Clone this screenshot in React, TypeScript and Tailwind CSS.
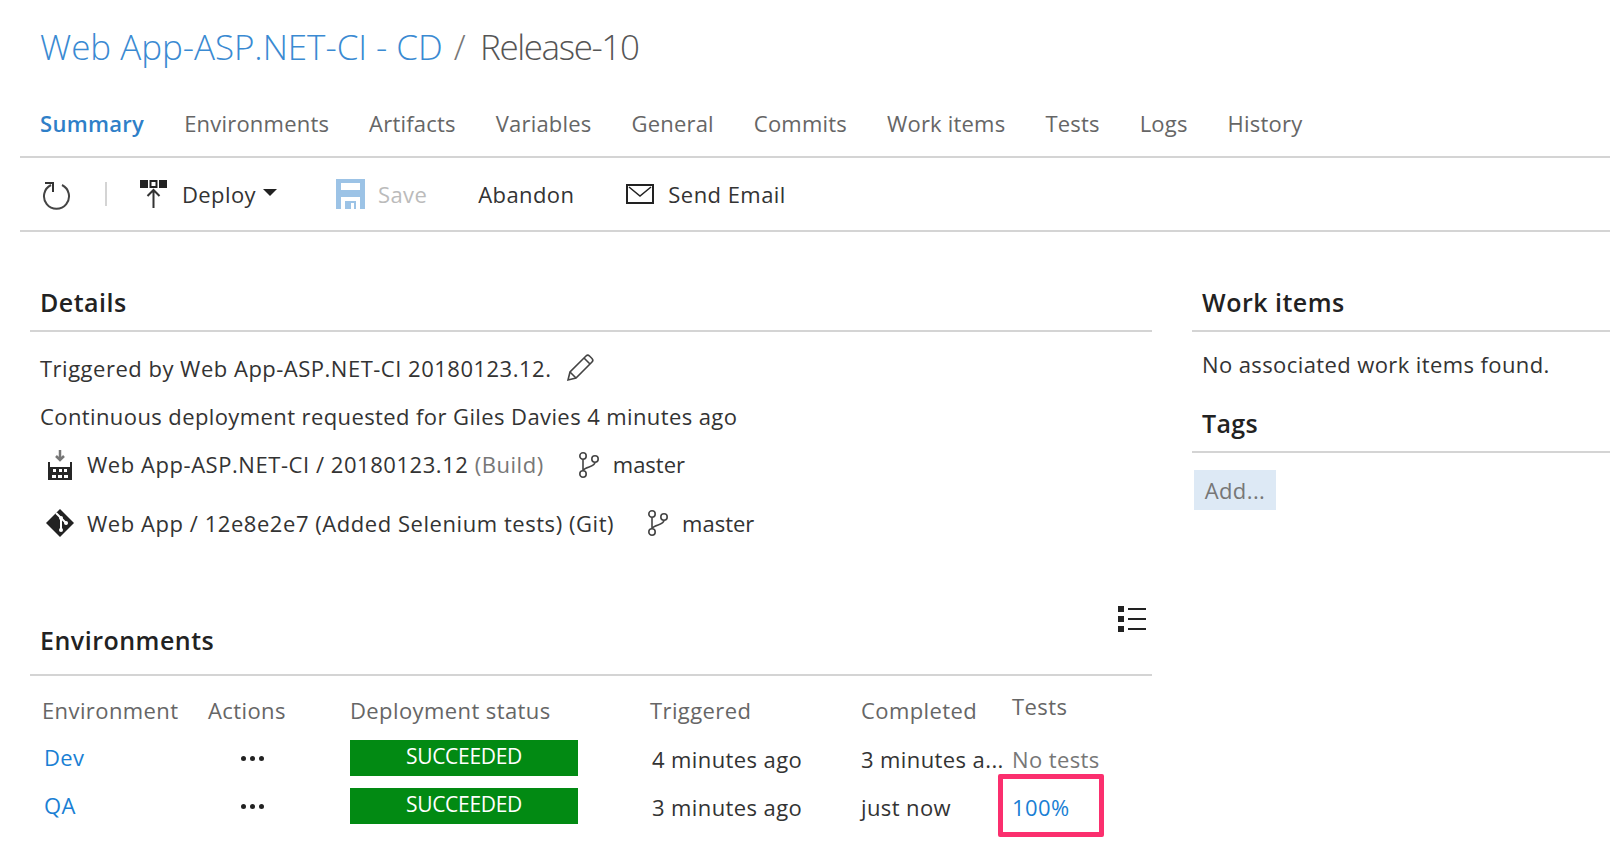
const tabs = ["Environments", "Artifacts", "Variables", "General", "Commits", "Work items", "Tests", "Logs", "History"];

function RefreshIcon() {
  return (
    <svg width="30" height="32" viewBox="0 0 30 32" fill="none" stroke="#333" strokeWidth="2">
      <path d="M20 7a12.5 12.5 0 1 1-11 0" stroke="#444" />
      <path d="M3 5h8v9" strokeWidth="2" />
    </svg>
  );
}

function DeployIcon() {
  return (
    <svg width="28" height="30" viewBox="0 0 28 30" fill="none">
      <rect x="0" y="1" width="8" height="8" fill="#222" />
      <rect x="10.5" y="2" width="6" height="6" stroke="#222" strokeWidth="2" />
      <rect x="19" y="1" width="8" height="8" fill="#222" />
      <path d="M13.5 29V11M7.5 17l6-6 6 6" stroke="#333" strokeWidth="2" />
    </svg>
  );
}

function SaveIcon() {
  return (
    <svg width="29" height="30" viewBox="0 0 29 30">
      <path d="M0 0h29v30h-5V18H5v12H0z" fill="#9cc3e6" />
      <path d="M5 4h19v7H5z" fill="#fff" />
      <path d="M9 22h11v8H9z" fill="#9cc3e6" />
      <path d="M15 24h3v6h-3z" fill="#fff" />
    </svg>
  );
}

function MailIcon() {
  return (
    <svg width="28" height="20" viewBox="0 0 28 20" fill="none" stroke="#222" strokeWidth="2">
      <rect x="1" y="1" width="26" height="18" />
      <path d="M3 3l11 9 11-9" strokeWidth="1.5" />
    </svg>
  );
}

function PencilIcon() {
  return (
    <svg width="30" height="30" viewBox="0 0 30 30" fill="none" stroke="#444" strokeWidth="1.6">
      <path d="M3 27l2-8L21 3a2.5 2.5 0 0 1 3.5 0l2.5 2.5a2.5 2.5 0 0 1 0 3.5L11 25z" />
      <path d="M5 19l6 6M19 5l6 6" />
    </svg>
  );
}

function BuildIcon() {
  return (
    <svg width="26" height="30" viewBox="0 0 26 30">
      <path d="M13 0v9M9 6l4 4 4-4" stroke="#777" strokeWidth="2.5" fill="none" />
      <path d="M1 12h2v5h20v-5h2v18H1z" fill="#262626" />
      <path d="M6 19h3v3H6zM12 19h3v3h-3zM17 19h3v3h-3zM5 25h4v3H5zM11 25h4v3h-4zM17 25h4v3h-4z" fill="#fff" />
    </svg>
  );
}

function GitIcon() {
  return (
    <svg width="30" height="30" viewBox="0 0 30 30">
      <path d="M15 1l14 14-14 14L1 15z" fill="#222" />
      <path d="M11 5l5 5M16 10v12" stroke="#fff" strokeWidth="2" />
      <path d="M16 10l6 6" stroke="#fff" strokeWidth="2" />
      <circle cx="16" cy="10" r="2" fill="#fff" />
      <circle cx="21" cy="15" r="2" fill="#fff" />
      <circle cx="16" cy="22" r="2" fill="#fff" />
    </svg>
  );
}

function BranchIcon() {
  return (
    <svg width="22" height="28" viewBox="0 0 22 28" fill="none" stroke="#444" strokeWidth="1.6">
      <circle cx="5" cy="5" r="3.2" />
      <circle cx="5" cy="23" r="3.2" />
      <circle cx="17" cy="8" r="3.2" />
      <path d="M5 8.2v11.6M17 11.2c0 5-9 4-12 8" />
    </svg>
  );
}

function ListIcon() {
  return (
    <svg width="28" height="26" viewBox="0 0 28 26" fill="#222">
      <rect x="0" y="0" width="6" height="6" />
      <rect x="0" y="10" width="6" height="6" />
      <rect x="0" y="20" width="6" height="6" />
      <rect x="10" y="2" width="18" height="2" />
      <rect x="10" y="12" width="18" height="2" />
      <rect x="10" y="22" width="18" height="2" />
    </svg>
  );
}

function Dots() {
  return (
    <div className="flex h-[36px] items-center gap-[4px] pl-[33px]">
      <span className="size-[5px] rounded-full bg-[#222]" />
      <span className="size-[5px] rounded-full bg-[#222]" />
      <span className="size-[5px] rounded-full bg-[#222]" />
    </div>
  );
}

function Status() {
  return (
    <div className="flex h-[36px] w-[228px] items-center justify-center bg-[#028a13] pb-[2px] text-[21px] tracking-[-0.3px] text-white">
      SUCCEEDED
    </div>
  );
}

export default function App() {
  return (
    <div className="h-[862px] overflow-hidden bg-white pl-5 text-[22px] text-[#333] font-['Open_Sans',sans-serif] tracking-[0.4px]">
      <div className="flex h-[94px] items-center pl-5 text-[35px] font-light">
        <span className="tracking-[-0.05px] text-[#3a8ad2]">Web App-ASP.NET-CI - CD</span>
        <span className="ml-[11px] text-[#777]">/</span>
        <span className="ml-[14px] tracking-[-1.4px] text-[#555]">Release-10</span>
      </div>

      <div className="flex h-[64px] items-start gap-[40px] border-b-2 border-[#d4d4d4] pl-5 pt-[9px] leading-[40px] tracking-[0.2px] text-[#666]">
        <span className="font-semibold tracking-[0.3px] text-[#2f7fc8]">Summary</span>
        {tabs.map((tab) => (
          <span key={tab}>{tab}</span>
        ))}
      </div>

      <div className="flex h-[74px] items-center border-b-2 border-[#d4d4d4] pl-[22px]">
        <RefreshIcon />
        <div className="ml-[33px] h-[24px] w-[2px] bg-[#d4d4d4]" />
        <div className="ml-[33px]"><DeployIcon /></div>
        <span className="ml-[14px]">Deploy</span>
        <span className="ml-[7px] mb-[4px] border-x-[7px] border-t-[7px] border-x-transparent border-t-[#222]" />
        <div className="ml-[59px]"><SaveIcon /></div>
        <span className="ml-[13px] text-[#bbb]">Save</span>
        <span className="ml-[51px]">Abandon</span>
        <div className="ml-[52px]"><MailIcon /></div>
        <span className="ml-[14px] tracking-[0.45px]">Send Email</span>
      </div>

      <div className="flex gap-[40px] pl-[10px] pt-[51px]">
        <div className="w-[1122px] shrink-0">
          <h2 className="h-[49px] border-b-2 border-[#d4d4d4] pl-[10px] pb-[2px] text-[25px] font-semibold leading-[38px] tracking-[0.5px] text-[#222]">Details</h2>
          <div className="mt-[12px] pl-[10px]">
            <div className="flex h-[48px] items-center tracking-[0.5px]">
              Triggered by Web App-ASP.NET-CI 20180123.12.
              <span className="ml-[14px] mb-[1px]"><PencilIcon /></span>
            </div>
            <div className="flex h-[49px] items-center">Continuous deployment requested for Giles Davies 4 minutes ago</div>
            <div className="flex h-[47px] items-center">
              <span className="ml-[7px]"><BuildIcon /></span>
              <span className="ml-[14px] tracking-[0.55px]">Web App-ASP.NET-CI / 20180123.12 <span className="text-[#777]">(Build)</span></span>
              <span className="ml-[34px]"><BranchIcon /></span>
              <span className="ml-[13px] tracking-[0px]">master</span>
            </div>
            <div className="mt-[11px] flex h-[48px] items-center">
              <span className="ml-[5px]"><GitIcon /></span>
              <span className="ml-[12px] tracking-[0.55px]">Web App / 12e8e2e7 (Added Selenium tests) (Git)</span>
              <span className="ml-[33px]"><BranchIcon /></span>
              <span className="ml-[13px] tracking-[0px]">master</span>
            </div>
          </div>

          <div className="mt-[59px] flex h-[70px] items-start justify-between border-b-2 border-[#d4d4d4] pl-[10px] pr-[6px]">
            <h2 className="pt-[14px] text-[25px] font-semibold leading-[40px] tracking-[0.5px] text-[#222]">Environments</h2>
            <ListIcon />
          </div>

          <div className="grid grid-cols-[166px_142px_300px_211px_151px_1fr] grid-rows-[64px_36px_48px] pl-[12px]">
            <div className="pt-[14px] leading-[40px] text-[#666]">Environment</div>
            <div className="pt-[14px] leading-[40px] text-[#666]">Actions</div>
            <div className="pt-[14px] leading-[40px] text-[#666]">Deployment status</div>
            <div className="pt-[14px] leading-[40px] text-[#666]">Triggered</div>
            <div className="pt-[14px] leading-[40px] text-[#666]">Completed</div>
            <div className="pt-[10px] leading-[40px] text-[#666]">Tests</div>

            <a className="pl-[2px] leading-[34px] text-[#1a7fd4]">Dev</a>
            <Dots />
            <Status />
            <div className="pl-[2px] pt-[1px] leading-[36px]">4 minutes ago</div>
            <div className="pt-[1px] leading-[36px] whitespace-nowrap">3 minutes a...</div>
            <div className="pt-[1px] leading-[36px] text-[#777]">No tests</div>

            <a className="mt-[12px] pl-[2px] leading-[34px] text-[#1a7fd4]">QA</a>
            <div className="mt-[12px]"><Dots /></div>
            <div className="mt-[12px]"><Status /></div>
            <div className="mt-[12px] pl-[2px] pt-[1px] leading-[36px]">3 minutes ago</div>
            <div className="mt-[12px] pt-[1px] leading-[36px]">just now</div>
            <div className="relative mt-[12px] pt-[1px] leading-[36px] text-[#1a7fd4]">
              100%
              <div className="absolute -left-[14px] -top-[14px] h-[63px] w-[106px] rounded-[2px] border-[5px] border-[#fb2f6e]" />
            </div>
          </div>
        </div>

        <div className="min-w-0 flex-1">
          <h2 className="h-[49px] border-b-2 border-[#d4d4d4] pl-[10px] pb-[2px] text-[25px] font-semibold leading-[38px] tracking-[0.5px] text-[#222]">Work items</h2>
          <div className="pl-[10px] pt-[12px] leading-[40px]">No associated work items found.</div>
          <h2 className="mt-[24px] h-[45px] border-b-2 border-[#d4d4d4] pl-[10px] text-[25px] font-semibold leading-[30px] tracking-[0.3px] text-[#222]">Tags</h2>
          <div className="ml-[2px] mt-[17px] flex h-[40px] w-[82px] items-center justify-center bg-[#dde9f5] text-[#777]">Add...</div>
        </div>
      </div>
    </div>
  );
}
